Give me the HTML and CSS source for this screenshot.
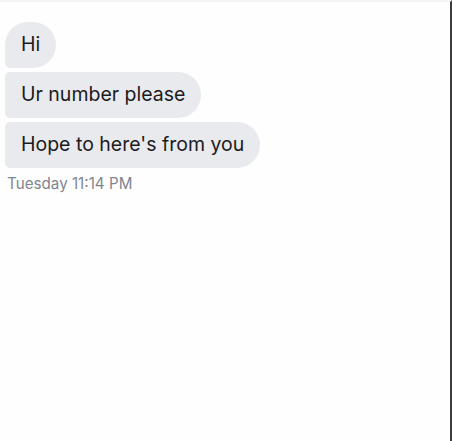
FILE: index.html
```html
<!DOCTYPE html>
<html>
<head>
<meta charset="utf-8">
<link rel="stylesheet" href="styles.css">
</head>
<body>
<div class="screen">
  <div class="thread">
    <div class="bubble first">Hi</div>
    <div class="bubble middle">Ur number please</div>
    <div class="bubble last">Hope to here's from you</div>
    <div class="stamp">Tuesday 11:14 PM</div>
  </div>
</div>
</body>
</html>
```
FILE: styles.css
```css
html, body {
  margin: 0;
  padding: 0;
  background: #fefefe;
}
.screen {
  width: 452px;
  height: 441px;
  border-right: 2px solid #3d3d3d;
  border-top: 2px solid #f4f4f4;
  box-sizing: border-box;
  font-family: Inter, "Noto Sans", sans-serif;
}
.thread {
  display: flex;
  flex-direction: column;
  align-items: flex-start;
  gap: 4px;
  padding: 20px 0 0 5px;
}
.bubble {
  background: #e9eaee;
  color: #1b1b1d;
  font-size: 19.5px;
  height: 46px;
  line-height: 45px;
  padding: 0 16px;
  box-sizing: border-box;
  border-radius: 23px;
}
.first { border-bottom-left-radius: 5px; }
.middle { border-top-left-radius: 5px; border-bottom-left-radius: 5px; }
.last { border-top-left-radius: 5px; border-bottom-left-radius: 5px; }
.stamp {
  margin-top: 3px;
  padding-left: 2px;
  font-size: 15.2px;
  line-height: 18px;
  color: #7e8690;
}
```
